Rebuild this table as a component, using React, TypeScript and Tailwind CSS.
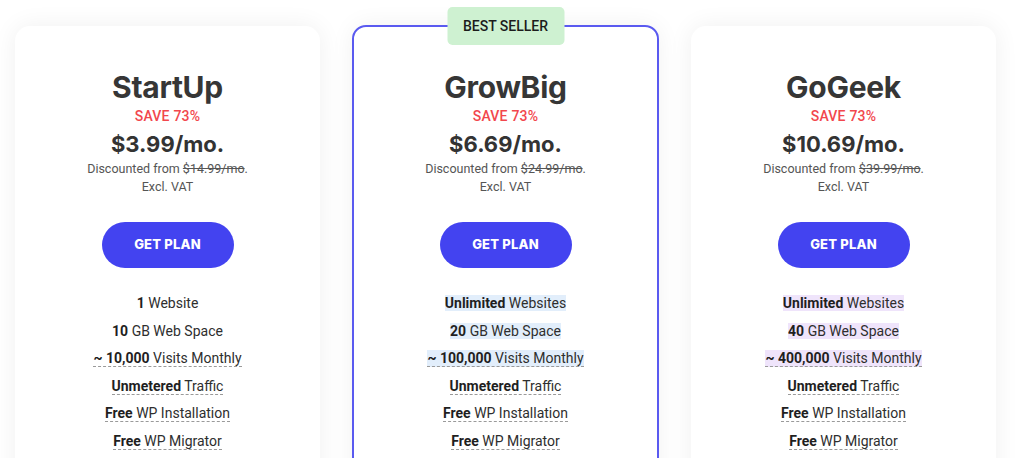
type Feature = { bold: string; rest: string; dashed?: boolean; hl?: boolean };

type Plan = {
  name: string;
  price: string;
  was: string;
  featured?: boolean;
  hl?: string;
  features: Feature[];
};

const plans: Plan[] = [
  {
    name: "StartUp",
    price: "$3.99/mo.",
    was: "$14.99/mo",
    features: [
      { bold: "1", rest: "Website" },
      { bold: "10", rest: "GB Web Space" },
      { bold: "~ 10,000", rest: "Visits Monthly", dashed: true },
      { bold: "Unmetered", rest: "Traffic", dashed: true },
      { bold: "Free", rest: "WP Installation", dashed: true },
      { bold: "Free", rest: "WP Migrator", dashed: true },
    ],
  },
  {
    name: "GrowBig",
    price: "$6.69/mo.",
    was: "$24.99/mo",
    featured: true,
    hl: "bg-[#e2eefb]",
    features: [
      { bold: "Unlimited", rest: "Websites", hl: true },
      { bold: "20", rest: "GB Web Space", hl: true },
      { bold: "~ 100,000", rest: "Visits Monthly", dashed: true, hl: true },
      { bold: "Unmetered", rest: "Traffic", dashed: true },
      { bold: "Free", rest: "WP Installation", dashed: true },
      { bold: "Free", rest: "WP Migrator", dashed: true },
    ],
  },
  {
    name: "GoGeek",
    price: "$10.69/mo.",
    was: "$39.99/mo",
    hl: "bg-[#efe4fb]",
    features: [
      { bold: "Unlimited", rest: "Websites", hl: true },
      { bold: "40", rest: "GB Web Space", hl: true },
      { bold: "~ 400,000", rest: "Visits Monthly", dashed: true, hl: true },
      { bold: "Unmetered", rest: "Traffic", dashed: true },
      { bold: "Free", rest: "WP Installation", dashed: true },
      { bold: "Free", rest: "WP Migrator", dashed: true },
    ],
  },
];

function PlanCard({ plan }: { plan: Plan }) {
  return (
    <div
      className={
        plan.featured
          ? "relative w-[307px] shrink-0 rounded-[14px] border-2 border-[#5a5af0] bg-white shadow-[0_0_24px_rgba(0,0,0,0.06)]"
          : "relative w-[307px] shrink-0 rounded-[16px] border-2 border-transparent bg-white bg-clip-padding shadow-[0_0_24px_rgba(0,0,0,0.06)]"
      }
    >
      {plan.featured && (
        <div className="absolute left-1/2 top-[-20px] flex h-[38px] w-[117px] -translate-x-1/2 items-center justify-center rounded-[5px] bg-[#cef1d1] font-['Roboto',sans-serif] text-[14px] font-medium text-[#1c1c1c]">
          BEST SELLER
        </div>
      )}
      <div className="flex flex-col items-center pt-[41px] pb-[40px] text-center">
        <h2 className="font-['Inter',sans-serif] text-[30px] font-bold leading-[38px] tracking-[-0.3px] text-[#363636]">
          {plan.name}
        </h2>
        <div className="font-['Roboto',sans-serif] text-[14px] font-medium leading-[20px] tracking-[0.2px] text-[#f2474d]">
          SAVE 73%
        </div>
        <div className="mt-[3px] font-['Inter',sans-serif] text-[22px] font-bold leading-[30px] text-[#333333]">
          {plan.price}
        </div>
        <div className="mt-px font-['Roboto',sans-serif] text-[12.5px] leading-[18px] text-[#555555]">
          Discounted from <span className="line-through">{plan.was}</span>.
        </div>
        <div className="font-['Roboto',sans-serif] text-[12.5px] leading-[18px] text-[#555555]">
          Excl. VAT
        </div>
        <button className="mt-[26px] flex h-[46px] w-[132px] items-center justify-center rounded-full bg-[#4343f0] font-['Inter',sans-serif] text-[13px] font-extrabold tracking-[0.2px] text-white">
          GET PLAN
        </button>
        <ul className="mt-[25px] flex flex-col items-center gap-[7.5px] font-['Roboto',sans-serif] text-[14px] leading-[20px] text-[#2e2e2e]">
          {plan.features.map((f) => (
            <li key={f.bold + f.rest}>
              <span
                className={[
                  f.dashed ? "border-b border-dashed border-[#9a9a9a]" : "",
                  f.hl && plan.hl ? plan.hl : "",
                ].join(" ")}
              >
                <b className="font-bold text-[#1f1f1f]">{f.bold}</b> {f.rest}
              </span>
            </li>
          ))}
        </ul>
      </div>
    </div>
  );
}

export default function App() {
  return (
    <div className="h-[458px] w-[1024px] overflow-hidden bg-white">
      <div className="flex items-start gap-[31px] pt-[25px] pl-[14px]">
        {plans.map((p) => (
          <PlanCard key={p.name} plan={p} />
        ))}
      </div>
    </div>
  );
}
